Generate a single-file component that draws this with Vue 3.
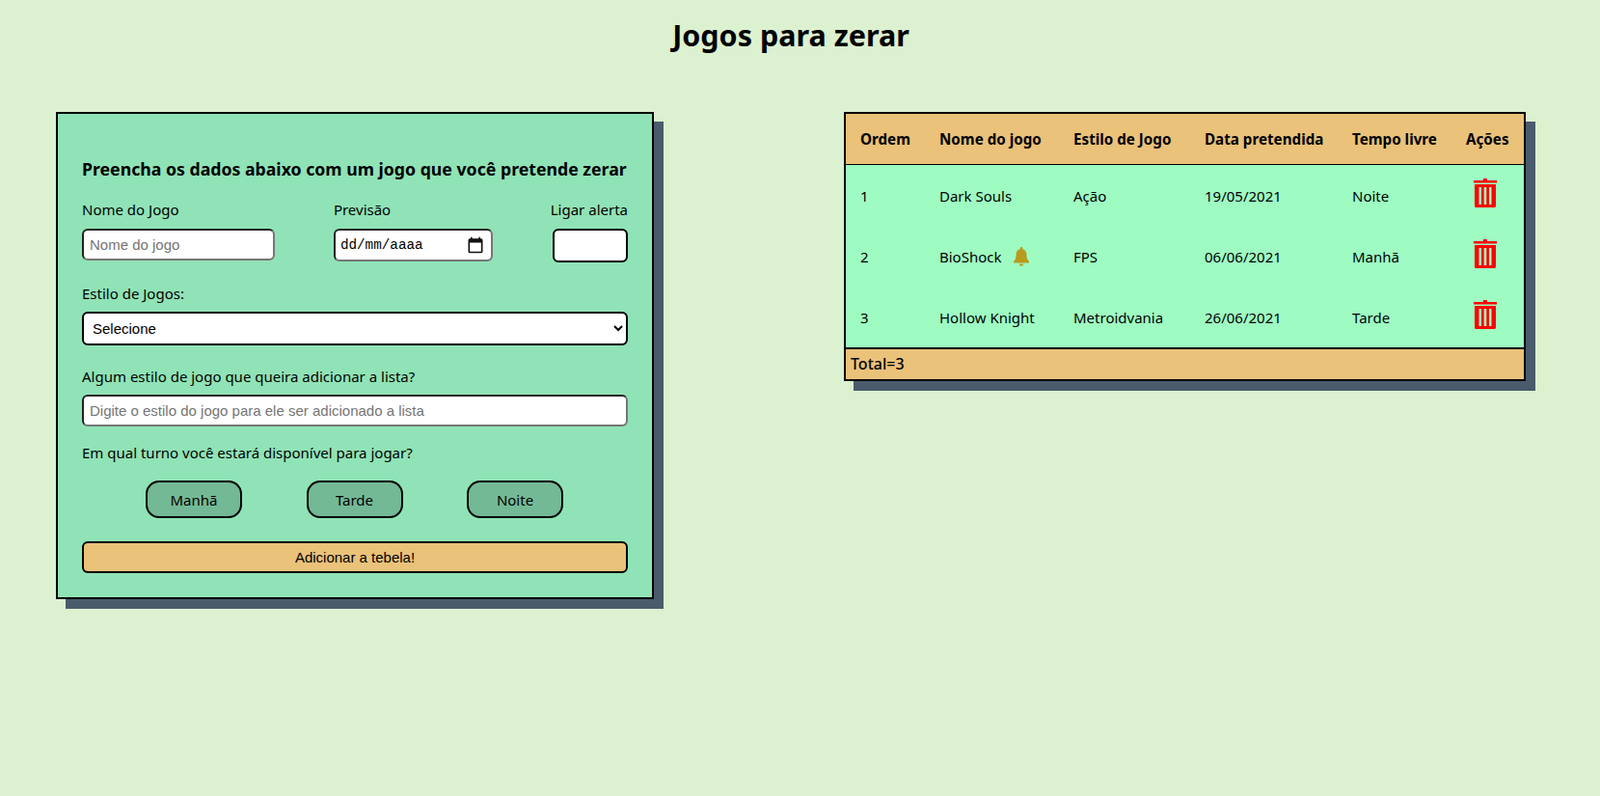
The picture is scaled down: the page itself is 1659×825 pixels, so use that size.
<template>
  <div class="page">
    <h1>Jogos para zerar</h1>
    <main class="content">
      <form class="card" @submit.prevent>
        <h2>Preencha os dados abaixo com um jogo que você pretende zerar</h2>

        <div class="top-row">
          <div class="field name-field">
            <label>Nome do Jogo</label>
            <input class="soft" placeholder="Nome do jogo" />
          </div>
          <div class="field date-field">
            <label>Previsão</label>
            <div class="date-box">
              <input class="date-text" placeholder="dd/mm/aaaa" />
              <svg class="date-icon" viewBox="0 0 24 24" width="20" height="20">
                <path d="M19 4h-1V2h-2v2H8V2H6v2H5a2 2 0 0 0-2 2v14a2 2 0 0 0 2 2h14a2 2 0 0 0 2-2V6a2 2 0 0 0-2-2zm0 16H5V9h14v11z" />
              </svg>
            </div>
          </div>
          <div class="field alert-field">
            <label>Ligar alerta</label>
            <input class="alert-input" />
          </div>
        </div>

        <div class="field style-field">
          <label>Estilo de Jogos:</label>
          <select class="style-select">
            <option>Selecione</option>
          </select>
        </div>

        <div class="field extra-field">
          <label>Algum estilo de jogo que queira adicionar a lista?</label>
          <input class="soft wide" placeholder="Digite o estilo do jogo para ele ser adicionado a lista" />
        </div>

        <p class="turn-label">Em qual turno você estará disponível para jogar?</p>
        <div class="turns">
          <button v-for="turn in turns" :key="turn" type="button" class="turn">{{ turn }}</button>
        </div>

        <button type="submit" class="add">Adicionar a tebela!</button>
      </form>

      <section class="table-card">
        <table>
          <thead>
            <tr>
              <th v-for="col in columns" :key="col.label" :style="{ width: col.width + 'px' }">{{ col.label }}</th>
            </tr>
          </thead>
          <tbody>
            <tr v-for="game in games" :key="game.order">
              <td>{{ game.order }}</td>
              <td>
                <span class="game-name">
                  {{ game.name }}
                  <svg v-if="game.alert" class="bell" viewBox="0 0 16 20" width="16" height="20">
                    <path d="M8 0a1.5 1.5 0 0 0-1.5 1.5v.7C3.900 2.900 2.600 5 2.600 7.600c0 3.800-.8 5.600-2.600 7.400v1.500h16V15c-1.800-1.800-2.600-3.600-2.600-7.400 0-2.600-1.300-4.700-3.900-5.400v-.7A1.500 1.500 0 0 0 8 0zM5.800 17.500a2.200 2.200 0 0 0 4.400 0z" />
                  </svg>
                </span>
              </td>
              <td>{{ game.style }}</td>
              <td>{{ game.date }}</td>
              <td>{{ game.time }}</td>
              <td class="actions">
                <svg class="trash" viewBox="0 0 24 30" width="24" height="30">
                  <path d="M10 0h4v2h10v2.500H0V2h10z" />
                  <path d="M1 6h22v22.500a1.500 1.500 0 0 1-1.500 1.500h-19A1.500 1.500 0 0 1 1 28.500zm4.500 3v18h2.500V9zm5.200 0v18h2.600V9zM16 9v18h2.500V9z" fill-rule="evenodd" />
                </svg>
              </td>
            </tr>
          </tbody>
        </table>
        <footer class="total">Total={{ games.length }}</footer>
      </section>
    </main>
  </div>
</template>

<script setup>
const turns = ['Manhã', 'Tarde', 'Noite']

const columns = [
  { label: 'Ordem', width: 82 },
  { label: 'Nome do jogo', width: 139 },
  { label: 'Estilo de Jogo', width: 136 },
  { label: 'Data pretendida', width: 153 },
  { label: 'Tempo livre', width: 118 },
  { label: 'Ações', width: 75 }
]

const games = [
  { order: 1, name: 'Dark Souls', style: 'Ação', date: '19/05/2021', time: 'Noite', alert: false },
  { order: 2, name: 'BioShock', style: 'FPS', date: '06/06/2021', time: 'Manhã', alert: true },
  { order: 3, name: 'Hollow Knight', style: 'Metroidvania', date: '26/06/2021', time: 'Tarde', alert: false }
]
</script>

<style>
body {
  background: #dcf1d0;
}
</style>

<style scoped>
.page {
  width: 1640px;
  height: 825px;
  overflow: hidden;
  font-family: "Noto Sans", sans-serif;
  font-size: 15px;
  color: #000;
}

h1 {
  margin: 0;
  padding-top: 14px;
  height: 101px;
  box-sizing: border-box;
  text-align: center;
  font-size: 30.5px;
  line-height: 44px;
  font-weight: 700;
}

.content {
  display: flex;
  justify-content: space-between;
  align-items: flex-start;
  padding: 15px 58px 0;
}

.card {
  width: 620px;
  height: 505px;
  box-sizing: border-box;
  padding: 45px 25px 0;
  background: #90e3b6;
  border: 2px solid #000;
  box-shadow: 10px 10px 0 #4a5b6c;
}

h2 {
  margin: 0;
  font-size: 17.7px;
  line-height: 24px;
  font-weight: 700;
  white-space: nowrap;
}

.field {
  display: flex;
  flex-direction: column;
}

.field label {
  line-height: 20px;
}

.top-row {
  display: flex;
  justify-content: space-between;
  margin-top: 20px;
}

.field input,
.field select {
  box-sizing: border-box;
  border-radius: 6px;
  background: #fff;
  font-family: "Liberation Sans", sans-serif;
  font-size: 15px;
  color: #000;
  outline: none;
}

.top-row label {
  margin-bottom: 10px;
}

.soft {
  height: 33px;
  width: 200px;
  padding: 0 6px;
  border-width: 2px;
  border-style: solid;
  border-color: #222 #767676 #767676 #222;
}

.soft::placeholder {
  color: #757575;
}

.wide {
  width: 100%;
}

.date-field {
  margin-left: 1px;
}

.date-box {
  position: relative;
  width: 165px;
}

.date-text.date-text {
  width: 100%;
  height: 34px;
  padding: 0 5px;
  border-width: 2px;
  border-style: solid;
  border-color: #222 #767676 #767676 #222;
  font-family: "Liberation Mono", monospace;
  font-size: 14.3px;
}

.date-text::placeholder {
  color: #000;
  opacity: 1;
}

.date-icon {
  position: absolute;
  top: 7px;
  right: 8px;
  fill: #111;
}

.alert-field {
  align-items: flex-end;
}

.alert-input.alert-input {
  width: 78px;
  height: 35px;
  border: 2px solid #000;
}

.style-field {
  margin-top: 22px;
}

.style-field label {
  margin-bottom: 9px;
}

.style-select.style-select {
  width: 100%;
  height: 35px;
  padding: 0 5px;
  border: 2px solid #000;
}

.extra-field {
  margin-top: 22px;
}

.extra-field label {
  margin-bottom: 9px;
}

.turn-label {
  margin: 17px 0 0;
  line-height: 20px;
}

.turns {
  display: flex;
  justify-content: space-between;
  margin-top: 19px;
  padding: 0 67px 0 66px;
}

.turn {
  width: 100px;
  height: 39px;
  padding: 0;
  background: #74b996;
  border: 2px solid #000;
  border-radius: 14px;
  font-family: inherit;
  font-size: 15px;
  color: #000;
}

.add {
  display: block;
  width: 100%;
  height: 33px;
  margin-top: 24px;
  padding: 0;
  background: #eac27a;
  border: 2px solid #000;
  border-radius: 6px;
  font-family: "Liberation Sans", sans-serif;
  font-size: 15px;
  color: #000;
}

.table-card {
  width: 707px;
  box-sizing: border-box;
  background: #9efcc2;
  border: 2px solid #000;
  box-shadow: 10px 10px 0 #4a5b6c;
}

table {
  width: 100%;
  table-layout: fixed;
  border-collapse: collapse;
}

th {
  height: 52px;
  padding: 0 0 0 15px;
  box-sizing: border-box;
  background: #eac27a;
  border-bottom: 1px solid #000;
  text-align: left;
  font-size: 15.2px;
  font-weight: 700;
  white-space: nowrap;
}

td {
  height: 63px;
  padding: 2px 0 0 15px;
  box-sizing: border-box;
  white-space: nowrap;
}

tbody tr:last-child td {
  height: 64px;
}

.game-name {
  display: inline-flex;
  align-items: center;
  gap: 12px;
}

.bell {
  fill: #b89b1e;
}

.actions {
  padding-left: 23px;
}

.trash {
  display: block;
  fill: #f00;
  margin-top: -6px;
}

.total {
  height: 33px;
  box-sizing: border-box;
  padding-left: 5px;
  background: #eac27a;
  border-top: 2px solid #000;
  font-size: 16px;
  font-weight: 500;
  line-height: 31px;
}
</style>
